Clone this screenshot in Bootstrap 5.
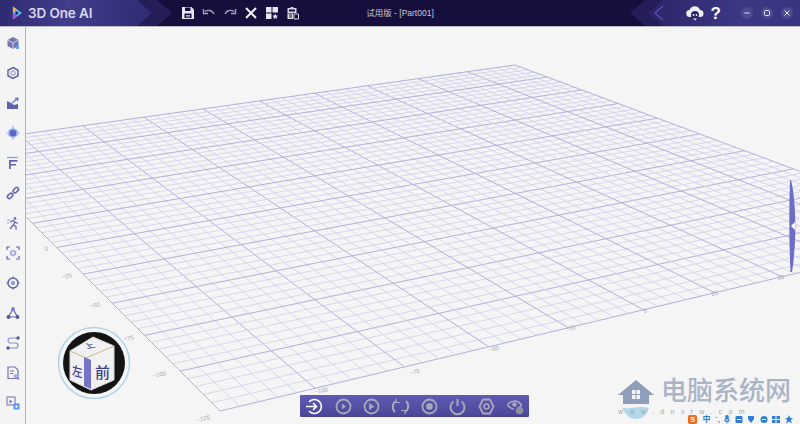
<!DOCTYPE html>
<html lang="zh">

<head>
    <meta charset="UTF-8">
    <title>3D One AI</title>
    <link href="https://cdn.jsdelivr.net/npm/bootstrap@5.3.2/dist/css/bootstrap.min.css" rel="stylesheet">
    <style>
        html, body { height: 424px; overflow: hidden; background: #f4f4f4; }
        .app-shell { width: 800px; height: 424px; font-family: "Liberation Sans", "Noto Sans CJK SC", sans-serif; }

        /* title bar */
        .title-bar { height: 27px; background: #160f3e; border-bottom: 1px solid #b9b8c4; }
        .brand-back { width: 172px; height: 26px; background: #241d58; clip-path: polygon(0 0, 157px 0, 172px 13px, 157px 26px, 0 26px); }
        .brand-front { width: 152px; height: 26px; padding-left: 11px; gap: 4px; background: linear-gradient(100deg, #2e2a70, #423d8c 45%, #2f2a72); clip-path: polygon(0 0, 137px 0, 152px 13px, 137px 26px, 0 26px); }
        .brand-name { font-family: Inter, sans-serif; font-weight: 600; font-size: 13.5px; color: #d8d8ee; letter-spacing: -.1px; }
        .brand-chevron { margin-left: -34px; margin-right: 22px; }
        .tool-row { margin-left: 9px; gap: 7px; width: 168px; height: 26px; }
        .doc-title { width: 120px; font-size: 8.5px; color: #c9c8d4; text-align: center; }
        .end-back { width: 170px; height: 26px; background: #241d58; clip-path: polygon(0 13px, 15px 0, 170px 0, 170px 26px, 15px 26px); }
        .end-front { width: 152px; height: 26px; background: linear-gradient(90deg, #2a2468, #3d3884 60%, #39347f); clip-path: polygon(0 13px, 15px 0, 152px 0, 152px 26px, 15px 26px); }
        .end-chevron { margin-left: 5px; }
        .cloud-icon { margin-right: 4px; }
        .help-mark { font-size: 17px; line-height: 1; margin: 0 20px 0 3px; }
        .window-group { margin-right: -1px; }
        .window-btn { width: 12px; height: 12px; border-radius: 50%; background: #4d4a94; }

        /* side rail */
        .side-rail { width: 26px; background: #f4f4f4; border-right: 1px solid #b5b5b8; padding-top: 1px; z-index: 2; }
        .rail-cell { height: 30px; }

        /* viewport */
        .stage { background: #f5f5f5; }
        .stage-grid { top: 0; left: 0; width: 774px; height: 397px; }
        .grid-label { font-size: 6px; fill: #a9a9b4; font-family: "Liberation Sans", sans-serif; }
        .drawer-tab { top: 152px; right: 2px; }
        .view-cube { left: 31px; top: 299px; }
        .cube-face { font-family: "Noto Sans CJK SC", sans-serif; font-weight: 500; fill: #3f3d94; }

        /* bottom run bar */
        .run-bar { left: 274px; top: 368px; width: 229px; height: 22px; gap: 9.7px; padding-left: 5px; border-radius: 1px; background: linear-gradient(180deg, #5f5bb4, #4a4696); }

        /* watermark */
        .mark-zone { left: 591px; top: 351px; gap: 6px; }
        .mark-title { font-family: "Liberation Serif", "Noto Sans CJK SC", serif; font-weight: 500; font-size: 26px; line-height: 28px; color: #a9b4c6; margin-top: -14px; }
        .mark-url { left: 592px; top: 381px; font-size: 7px; line-height: 7px; color: #a9a9a9; letter-spacing: 6.4px; white-space: nowrap; }
        .ime-bar { left: 661px; top: 388px; height: 9px; gap: 4.5px; }
        .ime-text { font-size: 8px; line-height: 9px; font-weight: 700; color: #2f7fd6; }
    </style>
</head>

<body>
    <div class="app-shell d-flex flex-column">
        <!-- Title bar -->
        <div class="title-bar d-flex flex-shrink-0">
            <div class="d-flex align-items-start" style="width:340px">
                <div class="brand-back flex-shrink-0">
                    <div class="brand-front d-flex align-items-center">
                        <svg width="13" height="16" viewBox="0 0 14 16">
                            <path d="M2 1l10 7-10 7z" fill="#4fb4ef" />
                            <path d="M2 1l5 3.500-5 3.500z" fill="#f0b13c" />
                            <path d="M2 8l5 3.500-5 3.500z" fill="#b04fd8" />
                            <path d="M5 5.500L8 8l-3 2.500z" fill="#1c1650" />
                        </svg>
                        <span class="brand-name">3D One AI</span>
                    </div>
                </div>
                <svg class="brand-chevron flex-shrink-0 mt-1" width="12" height="18" viewBox="0 0 12 18"><path d="M2 2l8 7-8 7" fill="none" stroke="#5a55ad" stroke-width="1.200" /></svg>
                <div class="tool-row d-flex align-items-center">
                    <!-- save -->
                    <svg width="14" height="14" viewBox="0 0 14 14"><path d="M1 1h9.500L13 3.500V13H1z" fill="#e6e6ee" /><path d="M4 1.500h5.500v3.500H4z" fill="#160f3e" /><path d="M3.500 7.500h7V12h-7z" fill="#160f3e" /><path d="M5 9h4v.8H5zM5 10.500h4v.8H5z" fill="#e6e6ee" /></svg>
                    <!-- undo -->
                    <svg width="14" height="14" viewBox="0 0 14 14"><path d="M3 5.500c3-2 7-1.500 9 2.500M1.500 3v4.500H6" fill="none" stroke="#a4a3b4" stroke-width="1.400" /></svg>
                    <!-- redo -->
                    <svg width="14" height="14" viewBox="0 0 14 14"><path d="M11 5.500c-3-2-7-1.500-9 2.500M12.500 3v4.500H8" fill="none" stroke="#a4a3b4" stroke-width="1.400" /></svg>
                    <!-- delete -->
                    <svg width="14" height="14" viewBox="0 0 14 14"><path d="M2 2l10 10M12 2L2 12" fill="none" stroke="#f2f2f6" stroke-width="2" /></svg>
                    <!-- grid with star -->
                    <svg width="14" height="14" viewBox="0 0 14 14"><path d="M1 1h5.500v5.500H1zM7.500 1H13v5.500H7.500zM1 7.500h5.500V13H1z" fill="#e6e6ee" /><path d="M10.200 7.500l.9 1.900 2 .3-1.500 1.400.4 2-1.800-1-1.800 1 .4-2-1.500-1.400 2-.3z" fill="#e6e6ee" /></svg>
                    <!-- report -->
                    <svg width="14" height="14" viewBox="0 0 14 14"><path d="M1.500 2h3V1h3v1h3v5h-9zM3 3.500v2h6v-2z" fill="#d8d8e2" fill-rule="evenodd" /><path d="M1.500 7.500H7V13H1.500z" fill="#d8d8e2" /><path d="M8 8h4.500v5H8z" fill="none" stroke="#d8d8e2" /><path d="M3 9h3M3 11h3" stroke="#160f3e" /></svg>
                </div>
            </div>
            <div class="doc-title align-self-center">试用版 - [Part001]</div>
            <div class="end-back ms-auto d-flex justify-content-end flex-shrink-0">
                <div class="end-front d-flex align-items-center">
                    <svg class="end-chevron" width="12" height="18" viewBox="0 0 12 18"><path d="M10 2L2 9l8 7" fill="none" stroke="#5a55ad" stroke-width="1.200" /></svg>
                    <svg class="cloud-icon ms-auto" width="18" height="16" viewBox="0 0 18 16">
                        <path d="M4 12a3.500 3.500 0 0 1-.5-7A5.500 5.500 0 0 1 14 5a3.500 3.500 0 0 1 0 7z" fill="#eeeef4" />
                        <circle cx="9" cy="10" r="4" fill="#2a2468" />
                        <circle cx="7.500" cy="10" r=".9" fill="#eeeef4" /><circle cx="10.500" cy="10" r=".9" fill="#eeeef4" />
                        <path d="M7 13.500h4L9 15.500z" fill="#eeeef4" />
                    </svg>
                    <span class="help-mark fw-bold text-white">?</span>
                    <div class="window-group d-flex gap-2 pe-2">
                        <div class="window-btn d-flex align-items-center justify-content-center"><svg width="8" height="8" viewBox="0 0 8 8"><path d="M1.500 4h5" stroke="#e8e8f0" stroke-width="1.200" /></svg></div>
                        <div class="window-btn d-flex align-items-center justify-content-center"><svg width="8" height="8" viewBox="0 0 8 8"><rect x="1.500" y="1.500" width="5" height="5" rx="1" fill="none" stroke="#e8e8f0" /></svg></div>
                        <div class="window-btn d-flex align-items-center justify-content-center"><svg width="8" height="8" viewBox="0 0 8 8"><path d="M1.500 1.500l5 5M6.500 1.500l-5 5" stroke="#e8e8f0" /></svg></div>
                    </div>
                </div>
            </div>
        </div>

        <div class="d-flex flex-grow-1" style="min-height:0">
            <!-- Side rail -->
            <div class="side-rail d-flex flex-column align-items-center flex-shrink-0">
                <div class="rail-cell d-flex align-items-center"><svg width="14" height="14" viewBox="0 0 14 14"><path d="M7 1l5.500 3v6L7 13l-5.500-3V4z" fill="#7476b4" /><path d="M1.500 4L7 7l5.500-3M7 7v6" fill="none" stroke="#f4f4f4" stroke-width=".7" /><path d="M10 10h3v3h-3z" fill="#6aa2e8" /></svg></div>
                <div class="rail-cell d-flex align-items-center"><svg width="14" height="14" viewBox="0 0 14 14"><path d="M7 1.500l5 2.800v5.400l-5 2.800-5-2.800V4.300z" fill="none" stroke="#5f61ac" stroke-width="1.500" /><circle cx="7" cy="7" r="2.200" fill="none" stroke="#8587cc" /></svg></div>
                <div class="rail-cell d-flex align-items-center"><svg width="14" height="14" viewBox="0 0 14 14"><path d="M1 5l4 2 3 2 4-1v5H1z" fill="#5f61ac" /><path d="M6 7l6-5M12 2l-3 .5M12 2l-.5 3" fill="none" stroke="#6d75d0" stroke-width="1.200" /></svg></div>
                <div class="rail-cell d-flex align-items-center"><svg width="14" height="14" viewBox="0 0 14 14"><path d="M7 1.500l5 2.800v5.400l-5 2.800-5-2.800V4.300z" fill="#a9c2f2" /><circle cx="7" cy="7" r="3.500" fill="#5d66c4" /><circle cx="7" cy=".9" r=".8" fill="#8ea6e8" /><circle cx="7" cy="13.100" r=".8" fill="#8ea6e8" /><circle cx="1" cy="7" r=".8" fill="#8ea6e8" /><circle cx="13" cy="7" r=".8" fill="#8ea6e8" /></svg></div>
                <div class="rail-cell d-flex align-items-center"><svg width="14" height="14" viewBox="0 0 14 14"><path d="M1 1.500h11" stroke="#6fa0e6" stroke-width="1.200" /><path d="M3 4h8.500v1.700H4.800V8H10v1.600H4.800V13H3z" fill="#6365ad" /></svg></div>
                <div class="rail-cell d-flex align-items-center"><svg width="14" height="14" viewBox="0 0 14 14"><g fill="none" stroke="#6365ad" stroke-width="1.600"><rect x="-3.500" y="-1.800" width="6" height="3.600" rx="1.800" transform="translate(4.500 9.500) rotate(-45)" /><rect x="-2.500" y="-1.800" width="6" height="3.600" rx="1.800" transform="translate(9.500 4.500) rotate(-45)" /></g></svg></div>
                <div class="rail-cell d-flex align-items-center"><svg width="14" height="14" viewBox="0 0 14 14"><circle cx="9" cy="2.500" r="1.400" fill="#6d75d0" /><path d="M4 6l3-1.500 2 1.500-1.500 3 2.500 1.500v3M7 9l-3 4M9 6l3 1.500" fill="none" stroke="#6365ad" stroke-width="1.300" /><path d="M1 4h3M1 7h2" stroke="#8ea6e8" /></svg></div>
                <div class="rail-cell d-flex align-items-center"><svg width="14" height="14" viewBox="0 0 14 14"><path d="M1 4V1h3M10 1h3v3M13 10v3h-3M4 13H1v-3" fill="none" stroke="#6365ad" stroke-width="1.200" /><path d="M7 3.500l3.200 1.700v3.600L7 10.500 3.800 8.800V5.200z" fill="#a9b0e6" /><circle cx="7" cy="7" r="1.300" fill="#f4f4f4" /></svg></div>
                <div class="rail-cell d-flex align-items-center"><svg width="14" height="14" viewBox="0 0 14 14"><circle cx="7" cy="7" r="5" fill="none" stroke="#6365ad" stroke-width="1.500" /><circle cx="7" cy="7" r="2.200" fill="#8ea6e8" /><path d="M7 .5v2M7 11.500v2M.5 7h2M11.500 7h2" stroke="#6365ad" stroke-width="1.200" /></svg></div>
                <div class="rail-cell d-flex align-items-center"><svg width="14" height="14" viewBox="0 0 14 14"><path d="M7 3L2.500 11h9z" fill="none" stroke="#6365ad" stroke-width="1.200" /><circle cx="7" cy="3" r="2" fill="#7a82d8" /><circle cx="2.500" cy="11" r="2" fill="#55579f" /><circle cx="11.500" cy="11" r="2" fill="#55579f" /></svg></div>
                <div class="rail-cell d-flex align-items-center"><svg width="14" height="14" viewBox="0 0 14 14"><path d="M12 2H4.500a2.500 2.500 0 0 0 0 5h5a2.500 2.500 0 0 1 0 5H2" fill="none" stroke="#8a90dc" stroke-width="1.200" /><circle cx="12" cy="2" r="1.700" fill="#55579f" /><circle cx="2" cy="12" r="1.700" fill="#55579f" /></svg></div>
                <div class="rail-cell d-flex align-items-center"><svg width="14" height="14" viewBox="0 0 14 14"><path d="M2 1h7l3 3v8.500H2z" fill="none" stroke="#7274b8" stroke-width="1.200" /><path d="M4 5h4M4 7.500h3" stroke="#7274b8" /><circle cx="9.500" cy="10" r="2" fill="#a9b0e6" /><path d="M11 11.500l2 2" stroke="#5d80d8" stroke-width="1.200" /></svg></div>
                <div class="rail-cell d-flex align-items-center"><svg width="14" height="14" viewBox="0 0 14 14"><rect x="1" y="1" width="8" height="8" fill="#f4f4f4" stroke="#6f70b0" /><path d="M3.500 3.500l3 2-3 2z" fill="#6f70b0" /><rect x="7.500" y="7.500" width="6" height="6" fill="#5d94e6" /><circle cx="10.500" cy="10.500" r="1.300" fill="#f4f4f4" /></svg></div>
            </div>

            <!-- 3D viewport -->
            <div class="stage flex-grow-1 position-relative">
                <svg class="stage-grid position-absolute" id="grid-plane" viewBox="26 27 774 397">
                    <g fill="none" id="grid-lines"></g>
                    <text class="grid-label" x="45" y="251" transform="rotate(-8 45 251)">0</text>
                    <text class="grid-label" x="62" y="279" transform="rotate(-8 62 279)">−25</text>
                    <text class="grid-label" x="90" y="308" transform="rotate(-8 90 308)">−50</text>
                    <text class="grid-label" x="124" y="341" transform="rotate(-8 124 341)">−75</text>
                    <text class="grid-label" x="153" y="378" transform="rotate(-12 153 378)">−100</text>
                    <text class="grid-label" x="197" y="422" transform="rotate(-12 197 422)">−125</text>
                    <text class="grid-label" x="315" y="394" transform="rotate(-12 315 394)">−100</text>
                    <text class="grid-label" x="410" y="375" transform="rotate(-12 410 375)">−75</text>
                    <text class="grid-label" x="489" y="352" transform="rotate(-12 489 352)">−50</text>
                    <text class="grid-label" x="566" y="331" transform="rotate(-12 566 331)">−25</text>
                    <text class="grid-label" x="644" y="313" transform="rotate(-12 644 313)">0</text>
                    <text class="grid-label" x="712" y="296" transform="rotate(-12 712 296)">25</text>
                    <text class="grid-label" x="778" y="280" transform="rotate(-12 778 280)">50</text>
                </svg>

                <!-- panel tab -->
                <svg class="drawer-tab position-absolute" width="9" height="94" viewBox="0 0 9 94">
                    <path d="M2 1c5 20 6 60 1 92h-1.500C0 60 0 30 1 1z" fill="#6f6cc8" />
                    <path d="M2 47l4-4v8z" fill="#fff" />
                </svg>

                <!-- view cube -->
                <svg class="view-cube position-absolute" width="74" height="74" viewBox="0 0 74 74">
                    <circle cx="37" cy="37" r="35.500" fill="#f4f6f8" stroke="#b4d5e8" stroke-width="1.500" />
                    <circle cx="37" cy="37" r="31" fill="#141414" />
                    <path d="M36 11l21 9v34L34 64 13 54V25z" fill="#f1f1f1" stroke="#d8d8d8" />
                    <path d="M13 25l16 7 28-12" fill="none" stroke="#c9b98f" />
                    <path d="M27 31l7 3v29l-7-3z" fill="#7674c8" />
                    <text class="cube-face" font-size="13" transform="matrix(.8 .2 0 1 15 49)">左</text>
                    <text class="cube-face" font-size="15" transform="translate(38 52)">前</text>
                    <text class="cube-face" font-size="10" transform="matrix(.9 -.2 .6 .6 30 23)">上</text>
                </svg>

                <!-- run bar -->
                <div class="run-bar position-absolute d-flex align-items-center">
                    <svg width="19" height="19" viewBox="0 0 19 19"><path d="M4 5a7 7 0 1 1 0 9" fill="none" stroke="#fff" stroke-width="1.600" /><path d="M1 9.500h10M8 6l3.500 3.500L8 13" fill="none" stroke="#fff" stroke-width="1.600" /></svg>
                    <svg width="19" height="19" viewBox="0 0 19 19"><circle cx="9.500" cy="9.500" r="7" fill="none" stroke="#a9a8ba" stroke-width="1.800" /><path d="M8 6.500l4 3-4 3z" fill="#a9a8ba" /></svg>
                    <svg width="19" height="19" viewBox="0 0 19 19"><circle cx="9.500" cy="9.500" r="7" fill="none" stroke="#a9a8ba" stroke-width="1.800" /><path d="M7 6l5.500 3.500L7 13z" fill="#a9a8ba" /></svg>
                    <svg width="19" height="19" viewBox="0 0 19 19"><path d="M5 4a7 7 0 0 0-1 11M14 15a7 7 0 0 0 1-11" fill="none" stroke="#a9a8ba" stroke-width="2" /><path d="M5 1.500v4H9M14 17.500v-4H10" fill="none" stroke="#a9a8ba" stroke-width="1" /></svg>
                    <svg width="19" height="19" viewBox="0 0 19 19"><circle cx="9.500" cy="9.500" r="7" fill="none" stroke="#a9a8ba" stroke-width="1.800" /><circle cx="9.500" cy="9.500" r="3.300" fill="#a9a8ba" /></svg>
                    <svg width="19" height="19" viewBox="0 0 19 19"><path d="M5.500 4.500a7 7 0 1 0 8 0M9.500 2v7" fill="none" stroke="#a9a8ba" stroke-width="2" /></svg>
                    <svg width="19" height="19" viewBox="0 0 19 19"><path d="M6 2.500h7l3.500 7-3.500 7H6l-3.500-7z" fill="none" stroke="#a9a8ba" stroke-width="1.800" stroke-linejoin="round" /><circle cx="9.500" cy="9.500" r="2.500" fill="none" stroke="#a9a8ba" stroke-width="1.500" /></svg>
                    <svg width="19" height="19" viewBox="0 0 19 19"><path d="M1.500 8c4-5.500 10-5.500 14 0-1 1.500-2 2.500-3.500 3.200" fill="none" stroke="#a9a8ba" stroke-width="1.500" /><path d="M1.500 8c2 2.700 4.500 4 6.500 4" fill="none" stroke="#a9a8ba" stroke-width="1.500" /><circle cx="8.500" cy="7.500" r="2.200" fill="#a9a8ba" /><circle cx="13.500" cy="13.500" r="3.800" fill="#8e8da2" /></svg>
                </div>

                <!-- watermark -->
                <div class="mark-zone position-absolute d-flex align-items-center">
                    <svg width="38" height="42" viewBox="0 0 38 42">
                        <path d="M19 2L37 17h-5v9H6v-9H1z" fill="#8f9eba" />
                        <path d="M15 12h8v9h-8z" fill="#f4f4f4" />
                        <path d="M19 12v9M15 16.500h8" stroke="#8f9eba" />
                        <path d="M5 29c7 4 13-2 27 1-2 7-7 11-13 11S7 36 5 29z" fill="#b2d8ec" />
                    </svg>
                    <div class="mark-title">电脑系统网</div>
                </div>
                <div class="mark-url position-absolute">www.dnxtw.com</div>
                <div class="ime-bar position-absolute d-flex align-items-center">
                    <svg width="11" height="9" viewBox="0 0 11 11"><rect width="11" height="11" rx="2" fill="#ef6a1f" /><path d="M8 3H4v2.200h3.500v2.500H3" fill="none" stroke="#fff" stroke-width="1.300" /></svg>
                    <span class="ime-text">中</span>
                    <span class="ime-text">ˋ,</span>
                    <svg width="6" height="9" viewBox="0 0 6 9"><path d="M3 0a1.500 1.500 0 0 1 1.500 1.500v3a1.500 1.500 0 0 1-3 0v-3A1.500 1.500 0 0 1 3 0zM.5 4.500a2.500 2.500 0 0 0 5 0M3 7v2" fill="#2f7fd6" stroke="#2f7fd6" stroke-width=".5" /></svg>
                    <svg width="8" height="9" viewBox="0 0 8 9"><rect x=".5" y="1" width="7" height="7" rx="1" fill="#2f7fd6" /><path d="M2 4.500h4" stroke="#fff" /></svg>
                    <svg width="8" height="9" viewBox="0 0 8 9"><path d="M1 1h6v3L4 8 1 4z" fill="#2f7fd6" /></svg>
                    <svg width="8" height="9" viewBox="0 0 8 9"><circle cx="4" cy="4.500" r="3.500" fill="#2f7fd6" /><path d="M2 4.500h4" stroke="#fff" /></svg>
                    <svg width="8" height="9" viewBox="0 0 8 9"><path d="M0 1h3.500v3H0zM4.500 1H8v3H4.500zM0 5h3.500v3H0zM4.500 5H8v3H4.500z" fill="#2f7fd6" /></svg>
                    <svg width="8" height="9" viewBox="0 0 8 9"><path d="M4 0l1.200 3H8L5.800 5 7 8.500 4 6.500 1 8.500 2.200 5 0 3h2.800z" fill="#2f7fd6" /></svg>
                </div>
            </div>
        </div>
    </div>

    <script src="https://cdn.jsdelivr.net/npm/bootstrap@5.3.2/dist/js/bootstrap.bundle.min.js"></script>
    <script>
        // Plane corners in page pixels: near, right, far, left
        const corners = [[220, 411], [965, 233], [515, 65], [-47, 144]];

        // Projective map from the unit square onto those corners
        function buildMap(p) {
            const [x0, y0] = p[0], [x1, y1] = p[1], [x2, y2] = p[2], [x3, y3] = p[3];
            const dx1 = x1 - x2, dx2 = x3 - x2, sx = x0 - x1 + x2 - x3;
            const dy1 = y1 - y2, dy2 = y3 - y2, sy = y0 - y1 + y2 - y3;
            const den = dx1 * dy2 - dx2 * dy1;
            const g = (sx * dy2 - dx2 * sy) / den;
            const h = (dx1 * sy - sx * dy1) / den;
            const a = x1 - x0 + g * x1, b = x3 - x0 + h * x3;
            const d = y1 - y0 + g * y1, e = y3 - y0 + h * y3;
            return (u, v) => {
                const w = g * u + h * v + 1;
                return [(a * u + b * v + x0) / w, (d * u + e * v + y0) / w];
            };
        }

        const project = buildMap(corners);
        const gridLines = document.getElementById('grid-lines');
        const count = 50; // 5 unit cells, major line every 25 units

        function addLine(a, b, major) {
            const line = document.createElementNS('http://www.w3.org/2000/svg', 'line');
            line.setAttribute('x1', a[0].toFixed(1));
            line.setAttribute('y1', a[1].toFixed(1));
            line.setAttribute('x2', b[0].toFixed(1));
            line.setAttribute('y2', b[1].toFixed(1));
            line.setAttribute('stroke', major ? '#b0b0dc' : '#cfcfee');
            line.setAttribute('stroke-width', major ? '1' : '.8');
            gridLines.appendChild(line);
        }

        for (let i = 0; i <= count; i++) {
            const t = i / count;
            const major = i % 5 === 0;
            addLine(project(t, 0), project(t, 1), major);
            addLine(project(0, t), project(1, t), major);
        }
    </script>
</body>

</html>
